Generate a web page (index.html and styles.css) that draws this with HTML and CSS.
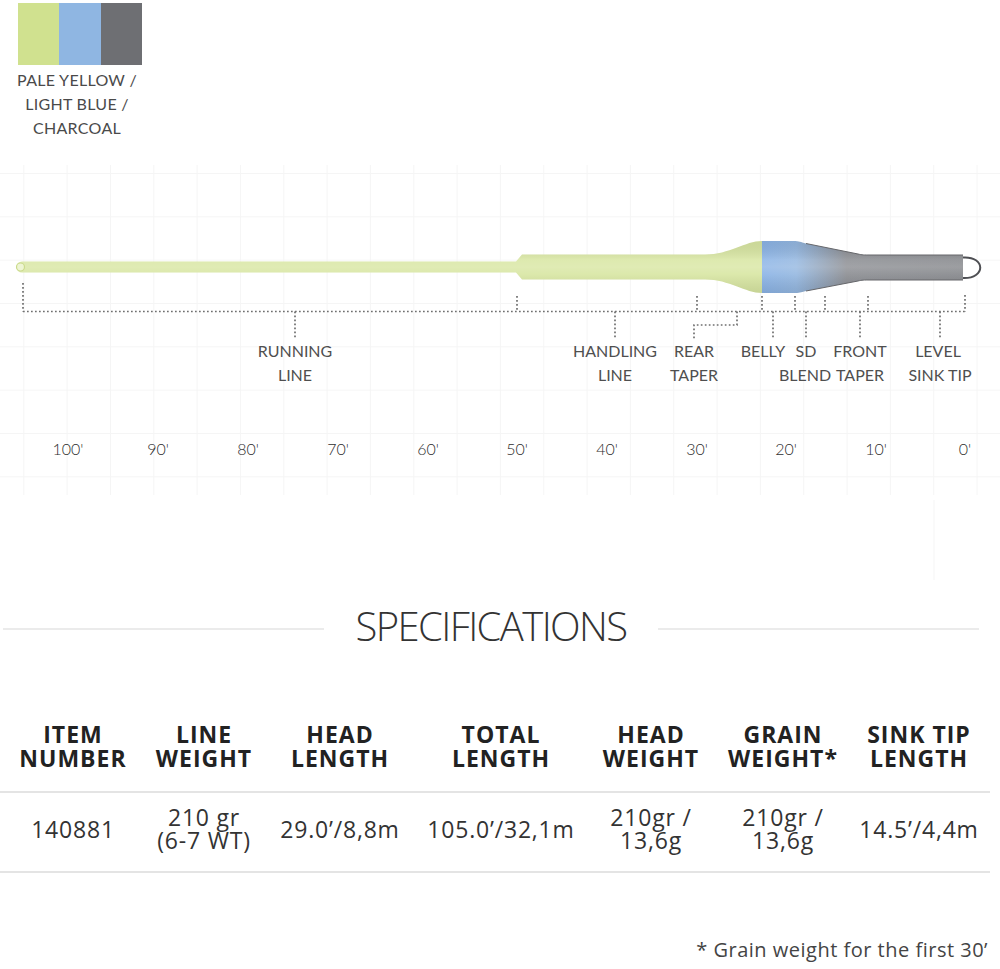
FILE: index.html
```html
<!DOCTYPE html>
<html lang="en">
<head>
<meta charset="utf-8">
<title>Line specifications</title>
<link rel="stylesheet" href="styles.css">
</head>
<body>
<div class="page">
  <div class="legend">
    <div class="swatches">
      <span class="sw sw-yellow"></span>
      <span class="sw sw-blue"></span>
      <span class="sw sw-charcoal"></span>
    </div>
    <div class="legend-label">PALE YELLOW /<br>LIGHT BLUE /<br>CHARCOAL</div>
  </div>

  <svg class="diagram" width="1000" height="452" viewBox="0 0 1000 452" xmlns="http://www.w3.org/2000/svg">
    <defs>
      <pattern id="grid" x="23.3" y="23" width="43.33" height="43.33" patternUnits="userSpaceOnUse">
        <path d="M0 0.5 H43.33 M0.5 0 V43.33" class="grid-line"/>
      </pattern>
      <linearGradient id="headGrad" gradientUnits="userSpaceOnUse" x1="762" y1="0" x2="963" y2="0">
        <stop offset="0" stop-color="#8ab3e6"/>
        <stop offset="0.17" stop-color="#94b7e0"/>
        <stop offset="0.42" stop-color="#8a8c91"/>
        <stop offset="1" stop-color="#84868a"/>
      </linearGradient>
      <linearGradient id="shade" gradientUnits="userSpaceOnUse" x1="0" y1="91" x2="0" y2="143">
        <stop offset="0" stop-color="#000" stop-opacity="0.06"/>
        <stop offset="0.36" stop-color="#fff" stop-opacity="0.14"/>
        <stop offset="0.5" stop-color="#fff" stop-opacity="0.2"/>
        <stop offset="0.64" stop-color="#fff" stop-opacity="0.1"/>
        <stop offset="1" stop-color="#000" stop-opacity="0.08"/>
      </linearGradient>
    </defs>

    <rect x="0" y="15" width="1000" height="330" fill="url(#grid)"/>
    <path class="grid-line" d="M934 350 V430"/>

    <!-- fly line -->
    <path class="line-green" d="M22 111.5 H516 L522 104.5 H705 C730 104.5 745 91 762 91 V143 C745 143 730 129.5 705 129.5 H522 L516 122.5 H22 A5.5 5.5 0 0 1 22 111.5 Z"/>
    <path class="line-head" d="M762 91 H793 C800 91 800 92 806 93.5 L858 104 C862 105 864 105 870 105 H963 V130 H870 C864 130 862 130 858 131 L806 141 C800 142.5 800 143 793 143 H762 Z"/>
    <path class="line-shade" d="M22 111.5 H516 L522 104.5 H705 C730 104.5 745 91 762 91 H793 C800 91 800 92 806 93.5 L858 104 C862 105 864 105 870 105 H963 V130 H870 C864 130 862 130 858 131 L806 141 C800 142.5 800 143 793 143 H762 C745 143 730 129.5 705 129.5 H522 L516 122.5 H22 A5.5 5.5 0 0 1 22 111.5 Z"/>
    <path class="line-edge" d="M806 93.5 L858 104 C862 105 864 105 870 105 H963 M806 141 L858 131 C862 130 864 130 870 130 H963"/>
    <circle class="loop-back" cx="20.5" cy="117" r="4"/>
    <path class="loop-tip" d="M963 107.5 C986 106 986 129 963 128"/>

    <!-- dotted callouts -->
    <path class="dots" d="M23 161.5 H965"/>
    <path class="dots" d="M23 133 V161.5 M517 146 V161.5 M697 146 V161.5 M762 146 V161.5 M795 146 V161.5 M825 146 V161.5 M868 146 V161.5 M965 145 V161.5"/>
    <path class="dots" d="M295 161.5 V189 M615 161.5 V189 M737 161.5 V175 H694 V189 M773 161.5 V189 M806 161.5 V189 M860 161.5 V189 M940 161.5 V189"/>

    <!-- labels -->
    <text class="lbl" x="295" y="207">RUNNING</text>
    <text class="lbl" x="295" y="231">LINE</text>
    <text class="lbl" x="615" y="207">HANDLING</text>
    <text class="lbl" x="615" y="231">LINE</text>
    <text class="lbl" x="694" y="207">REAR</text>
    <text class="lbl" x="694" y="231">TAPER</text>
    <text class="lbl" x="763" y="207">BELLY</text>
    <text class="lbl" x="806" y="207">SD</text>
    <text class="lbl" x="805" y="231">BLEND</text>
    <text class="lbl" x="860" y="207">FRONT</text>
    <text class="lbl" x="860" y="231">TAPER</text>
    <text class="lbl" x="938" y="207">LEVEL</text>
    <text class="lbl" x="940" y="231">SINK TIP</text>

    <!-- scale -->
    <text class="scale" x="68" y="305">100'</text>
    <text class="scale" x="158" y="305">90'</text>
    <text class="scale" x="248" y="305">80'</text>
    <text class="scale" x="338" y="305">70'</text>
    <text class="scale" x="428" y="305">60'</text>
    <text class="scale" x="517" y="305">50'</text>
    <text class="scale" x="607" y="305">40'</text>
    <text class="scale" x="697" y="305">30'</text>
    <text class="scale" x="786" y="305">20'</text>
    <text class="scale" x="876" y="305">10'</text>
    <text class="scale" x="965" y="305">0'</text>
  </svg>

  <div class="spec-head">
    <span class="rule"></span>
    <h2 class="spec-title">SPECIFICATIONS</h2>
    <span class="rule"></span>
  </div>

  <div class="spec-table">
    <div class="th">ITEM<br>NUMBER</div>
    <div class="th">LINE<br>WEIGHT</div>
    <div class="th">HEAD<br>LENGTH</div>
    <div class="th">TOTAL<br>LENGTH</div>
    <div class="th">HEAD<br>WEIGHT</div>
    <div class="th">GRAIN<br>WEIGHT*</div>
    <div class="th">SINK TIP<br>LENGTH</div>

    <div class="td">140881</div>
    <div class="td">210 gr<br>(6-7 WT)</div>
    <div class="td">29.0’/8,8m</div>
    <div class="td">105.0’/32,1m</div>
    <div class="td">210gr /<br>13,6g</div>
    <div class="td">210gr /<br>13,6g</div>
    <div class="td">14.5’/4,4m</div>
  </div>

  <p class="footnote">* Grain weight for the first 30’</p>
</div>
</body>
</html>
```

FILE: styles.css
```css
html, body {
  margin: 0;
  padding: 0;
  background: #ffffff;
}

body {
  font-family: "Open Sans", "Liberation Sans", sans-serif;
  color: #333333;
}

.page {
  width: 1000px;
}

/* colour legend */
.legend {
  width: 124px;
  height: 150px;
  margin-left: 18px;
  padding-top: 3px;
  box-sizing: border-box;
  display: flex;
  flex-direction: column;
  align-items: center;
}

.swatches {
  display: flex;
  width: 124px;
  height: 62px;
  flex-shrink: 0;
}

.sw {
  flex: 1;
}

.sw-yellow { background: #d0e18f; }
.sw-blue { background: #8fb6e2; }
.sw-charcoal { background: #6e6f73; }

.legend-label {
  margin-top: 3px;
  margin-right: 6px;
  white-space: nowrap;
  text-align: center;
  font-family: Lato, "Open Sans", sans-serif;
  font-size: 16px;
  letter-spacing: 0.3px;
  line-height: 24px;
  color: #4a4a4a;
}

/* diagram */
.diagram {
  display: block;
}

.grid-line {
  fill: none;
  stroke: #f5f5f5;
  stroke-width: 1;
}

.line-green {
  fill: #d8e6a2;
}

.line-head {
  fill: url(#headGrad);
}

.line-shade {
  fill: url(#shade);
}

.line-edge {
  fill: none;
  stroke: #66676b;
  stroke-width: 1;
}

.loop-back {
  fill: #eef5d4;
  stroke: #cbdb8c;
  stroke-width: 1.2;
}

.loop-tip {
  fill: #ffffff;
  stroke: #4e4f53;
  stroke-width: 2;
}

.dots {
  fill: none;
  stroke: #6f6f6f;
  stroke-width: 1.7;
  stroke-dasharray: 1.7 2.3;
}

.lbl {
  font-family: Lato, "Open Sans", sans-serif;
  font-size: 16px;
  fill: #4f4f4f;
  text-anchor: middle;
}

.scale {
  font-family: Lato, "Open Sans", sans-serif;
  font-weight: 300;
  font-size: 16px;
  fill: #2e2e2e;
  text-anchor: middle;
}

/* specifications heading */
.spec-head {
  display: flex;
  align-items: center;
  gap: 31px;
  padding: 0 21px 0 3px;
  height: 48px;
}

.rule {
  flex: 1;
  height: 2px;
  margin-top: 5px;
  background: #ebebeb;
}

.spec-title {
  margin: 0;
  font-family: "Open Sans", sans-serif;
  font-weight: 300;
  font-size: 40px;
  letter-spacing: -1.6px;
  line-height: 48px;
  color: #333333;
}

/* table */
.spec-table {
  display: grid;
  grid-template-columns: 146px 116px 156px 166px 134px 130px 142px;
  width: 990px;
  margin-top: 72px;
}

.th {
  display: flex;
  align-items: flex-end;
  justify-content: center;
  text-align: center;
  padding-bottom: 21px;
  border-bottom: 2px solid #e4e4e4;
  font-weight: 700;
  font-size: 23px;
  letter-spacing: 1px;
  line-height: 24px;
  color: #222222;
}

.td {
  display: flex;
  align-items: center;
  justify-content: center;
  text-align: center;
  padding: 13px 0 19px;
  border-bottom: 2px solid #e4e4e4;
  font-size: 23px;
  letter-spacing: 0.8px;
  line-height: 23px;
  color: #333333;
}

.footnote {
  margin: 64px 0 0;
  padding-right: 12px;
  text-align: right;
  font-size: 20px;
  letter-spacing: 0.5px;
  line-height: 26px;
  color: #444444;
}
```
